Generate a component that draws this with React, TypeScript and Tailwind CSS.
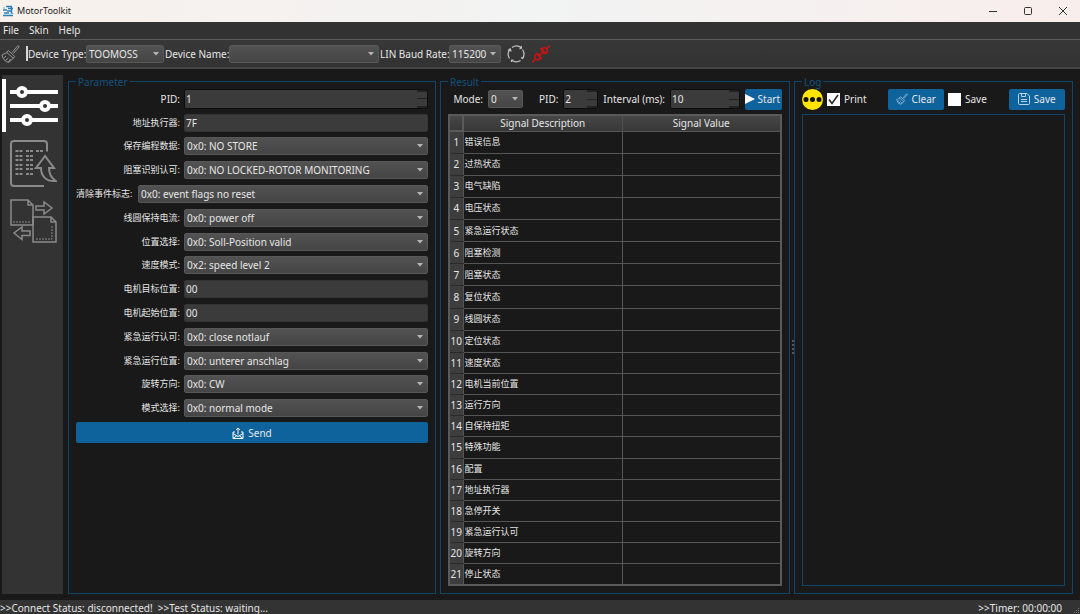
import React, { useId, useState } from 'react';

const params = [
  { label: '地址执行器', kind: 'text', value: '7F' },
  { label: '保存编程数据', kind: 'select', value: '0x0: NO STORE' },
  { label: '阻塞识别认可', kind: 'select', value: '0x0: NO LOCKED-ROTOR MONITORING' },
  { label: '清除事件标志', kind: 'select', value: '0x0: event flags no reset', wide: true },
  { label: '线圆保持电流', kind: 'select', value: '0x0: power off' },
  { label: '位置选择', kind: 'select', value: '0x0: Soll-Position valid' },
  { label: '速度模式', kind: 'select', value: '0x2: speed level 2' },
  { label: '电机目标位置', kind: 'text', value: '00' },
  { label: '电机起始位置', kind: 'text', value: '00' },
  { label: '紧急运行认可', kind: 'select', value: '0x0: close notlauf' },
  { label: '紧急运行位置', kind: 'select', value: '0x0: unterer anschlag' },
  { label: '旋转方向', kind: 'select', value: '0x0: CW' },
  { label: '模式选择', kind: 'select', value: '0x0: normal mode' },
];

const signals = [
  '错误信息', '过热状态', '电气缺陷', '电压状态', '紧急运行状态', '阻塞检测', '阻塞状态',
  '复位状态', '线圆状态', '定位状态', '速度状态', '电机当前位置', '运行方向', '自保持扭矩',
  '特殊功能', '配置', '地址执行器', '急停开关', '紧急运行认可', '旋转方向', '停止状态',
];

const Select: React.FC<{ id: string; value: string; className: string }> = ({ id, value, className }) => (
  <div className={`relative h-[18px] ${className}`}>
    <select
      id={id}
      defaultValue={value}
      className="block w-full h-full appearance-none rounded-xs border border-[#585858] bg-linear-to-b from-[#525252] to-[#454545] pl-0.5 pr-3 leading-4 outline-none"
    >
      <option value={value}>{value}</option>
    </select>
    <svg viewBox="0 0 6 4" className="absolute right-[5px] top-[7px] w-1.5 h-1 fill-[#b5b5b5] pointer-events-none">
      <path d="M0 0h6L3 3.6z" />
    </svg>
  </div>
);

const SpinBox: React.FC<{ id: string; initial: number; className: string }> = ({ id, initial, className }) => {
  const [value, setValue] = useState(initial);

  return (
    <div className={`flex h-5 rounded-xs border border-[#0d0d0d] bg-[#3b3b3b] ${className}`}>
      <input
        id={id}
        type="text"
        inputMode="numeric"
        value={value}
        onChange={(e) => setValue(Number(e.target.value) || 0)}
        className="flex-1 min-w-0 bg-transparent pl-px outline-none"
      />
      <div className="flex flex-col w-2.5 gap-px py-0.5 bg-[#222]">
        <button type="button" aria-label="+" onClick={() => setValue(value + 1)} className="flex-1 bg-[#3b3b3b]" />
        <button type="button" aria-label="-" onClick={() => setValue(value - 1)} className="flex-1 bg-[#3b3b3b]" />
      </div>
    </div>
  );
};

const Group: React.FC<{ title: string; children: React.ReactNode }> = ({ title, children }) => (
  <fieldset className="relative flex flex-col min-w-0 min-h-0 border border-[#0e4569] px-[7px] pb-[7px]">
    <legend className="h-3 px-0.5 leading-[14px] text-[#12527e]">{title}</legend>
    {children}
  </fieldset>
);

const Brush: React.FC<{ className: string }> = ({ className }) => (
  <svg viewBox="0 0 20 20" className={className} fill="none" stroke="currentColor" strokeLinejoin="round" strokeLinecap="round">
    <path d="M12 8l5.5-6.5q1.5-.5 1.5 1L13.5 9" />
    <path d="M8 6.5l6.500 6-1.500 2-6.800-6z" />
    <path d="M6.200 8.500L1 11q1 6 7 8l5-4.500M3 14l2-1.500M5 16.500l2.500-2M8 18l2-2.500" />
  </svg>
);

const Sidebar: React.FC = () => (
  <nav className="flex flex-col mr-px bg-[#333]">
    <button type="button" aria-label="Parameter" className="flex items-center h-[61px]">
      <span className="w-1 h-[53px] bg-white" />
      <svg viewBox="0 0 50 42" className="w-[50px] h-[42px] ml-[3px]" fill="#333" stroke="#fff" strokeWidth="4">
        <path d="M1 7h48M1 21h48M1 35h48" />
        <circle cx="13" cy="7" r="4" />
        <circle cx="36" cy="21" r="4" />
        <circle cx="18" cy="35" r="4" />
      </svg>
    </button>
    <button type="button" aria-label="Upload" className="flex justify-center h-[52px] pt-[3px]">
      <svg viewBox="0 0 48 48" className="w-12 h-12" fill="none" stroke="#8a8a8a" strokeWidth="2">
        <path d="M38 12.500V5q0-3-3-3H5Q2 2 2 5v39q0 3 3 3h30" />
        <path d="M6.500 12h7m3.500 0h7m3 0h7M6.500 17h7m3.500 0h7M6.500 21h7m3.500 0h7M6.500 26h7m3.500 0h7M6.500 30h7m3.500 0h7M6.500 35h7m3.500 0h7" strokeDasharray="3 1" />
        <path d="M36 17L27 29h5c0 8 5 14 15 13-5-3-7-7-7-13h5z" />
      </svg>
    </button>
    <button type="button" aria-label="Transfer" className="flex justify-center h-[60px] pt-[11px]">
      <svg viewBox="0 0 48 44" className="w-12 h-11" fill="none" stroke="#8a8a8a" strokeWidth="1.500">
        <path d="M24 26H2V1h17l5 5zM19 1v5h5" />
        <path d="M47 43H24V18h18l5 5zM42 18v5h5" />
        <path d="M4 23h18M27 40h16V26" strokeWidth="1" strokeDasharray="2 1" />
        <path d="M27 7h8V3l8 6-8 6v-4h-8zM21 32h-8v-4l-8 6 8 6.500v-4h8z" />
      </svg>
    </button>
  </nav>
);

const ParameterPanel: React.FC = () => {
  const id = useId();

  return (
    <Group title="Parameter">
      <form onSubmit={(e) => e.preventDefault()}>
        <div className="grid auto-rows-fr h-[333px]">
          <div className="flex items-center gap-1">
            <label htmlFor={`${id}-pid`} className="w-[104px] text-right">PID:</label>
            <SpinBox id={`${id}-pid`} initial={1} className="flex-1" />
          </div>
          {params.map((p) => (
            <div key={p.label} className="flex items-center gap-1">
              <label
                htmlFor={`${id}-${p.label}`}
                className={p.wide ? 'w-[58px] whitespace-nowrap text-[9px]' : 'w-[104px] text-right text-[9px]'}
              >
                {p.label}:
              </label>
              {p.kind === 'select' ? (
                <Select id={`${id}-${p.label}`} value={p.value} className="flex-1" />
              ) : (
                <input
                  id={`${id}-${p.label}`}
                  defaultValue={p.value}
                  className="flex-1 min-w-0 h-[18px] rounded-xs border border-[#343434] bg-[#3b3b3b] pl-px outline-none"
                />
              )}
            </div>
          ))}
        </div>
        <button type="submit" className="flex items-center justify-center gap-1 w-full h-[21px] mt-0.5 rounded-xs bg-[#0e639c]">
          <svg viewBox="0 0 12 12" className="w-3 h-3" fill="none" stroke="#fff">
            <path d="M3 5H1v6.500h10V5H9M1 6.500l5 3 5-3M1 11.500l4-3m6 3l-4-3M6 7.500V1M4 3l2-2 2 2" />
          </svg>
          Send
        </button>
      </form>
    </Group>
  );
};

const ResultPanel: React.FC = () => {
  const id = useId();

  return (
    <Group title="Result">
      <div className="flex items-center gap-[5px] h-[22px] mt-px whitespace-nowrap">
        <label htmlFor={`${id}-mode`} className="w-[35px] text-right">Mode:</label>
        <Select id={`${id}-mode`} value="0" className="w-[35px]" />
        <label htmlFor={`${id}-pid`} className="flex-1 text-right">PID:</label>
        <SpinBox id={`${id}-pid`} initial={2} className="w-[35px]" />
        <label htmlFor={`${id}-interval`}>Interval (ms):</label>
        <SpinBox id={`${id}-interval`} initial={10} className="w-[70px]" />
        <button type="button" className="flex items-center justify-between w-[37px] h-[21px] pr-0.5 rounded-xs bg-[#0e639c]">
          <svg viewBox="0 0 10 10" className="w-2.5 h-2.5 fill-white"><path d="M0 0l10 5-10 5z" /></svg>
          Start
        </button>
      </div>
      <table className="w-full flex-1 mt-1 table-fixed border-collapse border-2 border-[#5a5a5a]">
        <thead>
          <tr className="h-4 bg-linear-to-b from-[#474747] to-[#383838]">
            <th className="w-[14px] border-2 border-[#5a5a5a] p-0" />
            <th className="border-r border-[#505050] p-0 font-normal">Signal Description</th>
            <th className="p-0 font-normal">Signal Value</th>
          </tr>
        </thead>
        <tbody>
          {signals.map((name, i) => (
            <tr key={i} className={i < 10 ? 'h-[22px]' : 'h-[21px]'}>
              <th scope="row" className="border-y border-[#2a2a2a] bg-[#3d3d3d] p-0 font-normal">{i + 1}</th>
              <td className="border border-[#555] py-0 pl-px pr-0 text-[9px]">{name}</td>
              <td className="border border-[#555] p-0" />
            </tr>
          ))}
        </tbody>
      </table>
    </Group>
  );
};

const Check: React.FC<{ label: string; checked?: boolean }> = ({ label, checked }) => (
  <label className="relative flex flex-1 items-center gap-1">
    <input type="checkbox" defaultChecked={checked} className="peer w-[13px] h-[13px] appearance-none bg-white" />
    <svg viewBox="0 0 13 13" className="absolute left-0 hidden w-[13px] h-[13px] peer-checked:block" fill="none" stroke="#222" strokeWidth="1.500">
      <path d="M2 6.500L5 10.500 11 2" />
    </svg>
    {label}
  </label>
);

const LogPanel: React.FC = () => (
  <Group title="Log">
    {/* splitter grip */}
    <span className="absolute -left-[3px] top-1/2 h-[14px] border-l-2 border-dotted border-[#555]" />
    <div className="flex items-center gap-1 h-[22px] mt-px">
      <svg viewBox="0 0 21 21" className="w-[21px] h-[21px]">
        <circle cx="10.5" cy="10.5" r="10.5" fill="#ffe600" />
        <path d="M4 10.500h.01M10.500 10.500h.01M17 10.500h.01" stroke="#111" strokeWidth="5" strokeLinecap="round" />
      </svg>
      <Check label="Print" checked />
      <button type="button" className="flex flex-1 items-center justify-center gap-1 h-[21px] rounded-xs bg-[#0e639c]">
        <Brush className="w-3 h-3 text-[#b9d3e6]" />
        Clear
      </button>
      <Check label="Save" />
      <button type="button" className="flex flex-1 items-center justify-center gap-1 h-[21px] rounded-xs bg-[#0e639c]">
        <svg viewBox="0 0 12 12" className="w-3 h-3" fill="none" stroke="#b9d3e6">
          <path d="M.5 1.500q0-1 1-1H9L11.500 3v7.500q0 1-1 1h-9q-1 0-1-1zM3.500.5v3h4v-3M3 6.500h6M3 8.500h6" />
        </svg>
        Save
      </button>
    </div>
    <textarea aria-label="Log" readOnly className="flex-1 w-full mt-1 resize-none border border-[#0e4569] bg-[#191919] outline-none" />
  </Group>
);

const App: React.FC = () => (
  <div className="flex flex-col h-screen bg-[#191919] text-[10px] leading-3 text-[#e6e6e6] overflow-hidden font-['Noto_Sans','Noto_Sans_CJK_SC',sans-serif]">
    {/* Title bar */}
    <header className="flex items-center h-[22px] pl-0.5 bg-linear-to-r from-[#f8f1ec] via-[#f2f3f3] to-[#f8eeec] text-[#222]">
      <svg viewBox="0 0 12 12" className="w-3 h-3" fill="none" stroke="#2b7fb8">
        <path d="M4 1.500h6M6 3.500h5M1 5h4M5 6h5M2 8h5M1 10.500h10M9.500 2v6" strokeWidth="1.500" />
        <path d="M2 2v2M8.500 8.500h3" stroke="#63b4dd" />
      </svg>
      <h1 className="ml-[3px] text-[9px]">MotorToolkit</h1>
      <div className="flex items-center gap-[27px] ml-auto pr-[13px]">
        <button type="button" aria-label="Minimize">
          <svg viewBox="0 0 8 8" className="w-2 h-2" stroke="#333"><path d="M0 4.500h8" /></svg>
        </button>
        <button type="button" aria-label="Maximize">
          <svg viewBox="0 0 8 8" className="w-2 h-2" fill="none" stroke="#333"><rect x=".5" y=".5" width="7" height="7" rx="1" /></svg>
        </button>
        <button type="button" aria-label="Close">
          <svg viewBox="0 0 8 8" className="w-2 h-2" stroke="#333"><path d="M0 0l8 8M8 0L0 8" /></svg>
        </button>
      </div>
    </header>

    {/* Menu */}
    <nav className="flex items-center gap-[10px] h-[18px] pl-[3px] pb-px border-b border-[#5c5c5c] bg-[#323232]">
      <button type="button">File</button>
      <button type="button">Skin</button>
      <button type="button">Help</button>
    </nav>

    {/* Toolbar */}
    <div className="flex items-center h-[29px] pl-px border-b-2 border-[#454545] bg-linear-to-b from-[#383838] to-[#323232] whitespace-nowrap">
      <button type="button" aria-label="Clear"><Brush className="w-[19px] h-5 text-[#9a9a9a]" /></button>
      <span className="w-0.5 h-[15px] ml-1.5 bg-[#d8d8d8]" />
      <label htmlFor="device-type" className="w-[58px]">Device Type:</label>
      <Select id="device-type" value="TOOMOSS" className="w-[78px]" />
      <label htmlFor="device-name" className="w-16 ml-px">Device Name:</label>
      <Select id="device-name" value="" className="w-[150px]" />
      <label htmlFor="baud-rate" className="w-[69px] ml-px">LIN Baud Rate:</label>
      <Select id="baud-rate" value="115200" className="w-[52px]" />
      <button type="button" aria-label="Refresh" className="ml-1.5">
        <svg viewBox="0 0 18 18" className="w-[18px] h-[18px]" fill="none" stroke="#c4c4c4" strokeWidth="1.200">
          <path d="M2.500 13.500A8 8 0 0 1 3.200 4M5 2.500a8 8 0 0 1 9.500.5M15.500 4.500a8 8 0 0 1 0 9M13.500 15.500a8 8 0 0 1-9-.3" />
          <path d="M1 5.500L3.200 4l1 2.500M12.500 4l2-1-.5-2M14 12.500l1.500 1 1.500-2M4.500 17v-1.800l2-.2" />
        </svg>
      </button>
      <button type="button" aria-label="Connect" className="ml-[7px]">
        <svg viewBox="0 0 18 18" className="w-[18px] h-[18px]" fill="none" stroke="#d01212" strokeWidth="1.400">
          <path d="M0 17.500L3.500 14M18 .5L14.500 4M7.500 10.500l2.500-2.500M4 8l6 6M8.500 3l6 6" />
          <circle cx="5.500" cy="12" r="2.800" />
          <circle cx="12.500" cy="5.500" r="2.800" />
        </svg>
      </button>
    </div>

    {/* Panels */}
    <main className="flex-1 min-h-0 grid grid-cols-[62px_368fr_350fr_279fr] gap-1 pt-[6px] pb-[6px] pl-0.5 pr-[7px]">
      <Sidebar />
      <ParameterPanel />
      <ResultPanel />
      <LogPanel />
    </main>

    {/* Status bar */}
    <footer className="relative flex justify-between h-[14px] pt-0.5 pr-[18px] bg-[#333]">
      <p className="whitespace-pre">{'>>Connect Status: disconnected!  >>Test Status: waiting...'}</p>
      <p>&gt;&gt;Timer: 00:00:00</p>
      <svg viewBox="0 0 6 6" className="absolute right-0 bottom-0 w-1.5 h-1.5 fill-[#777]">
        <path d="M4 0h1v1H4zM2 2h1v1H2zM4 2h1v1H4zM0 4h1v1H0zM2 4h1v1H2zM4 4h1v1H4z" />
      </svg>
    </footer>
  </div>
);

export default App;
